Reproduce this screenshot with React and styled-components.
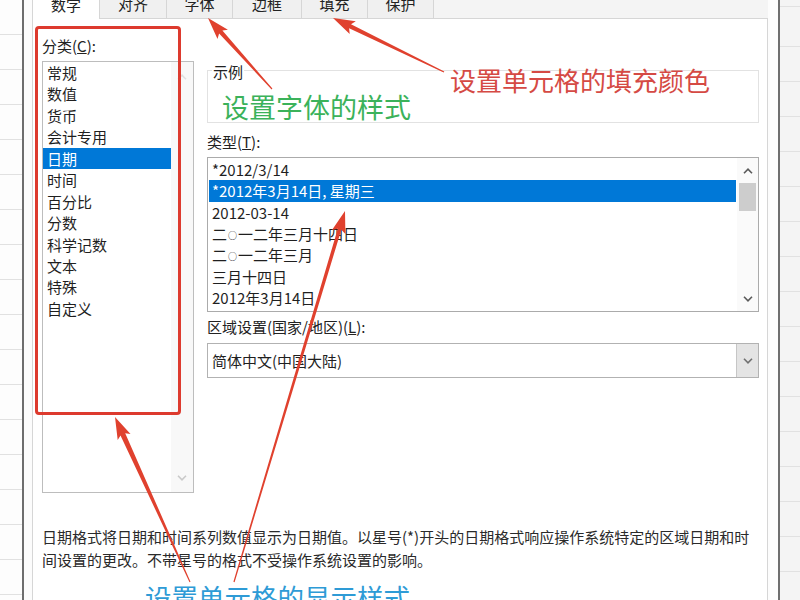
import React from 'react';
import styled, { createGlobalStyle } from 'styled-components';

const GlobalStyle = createGlobalStyle`
  html, body { margin: 0; padding: 0; width: 800px; height: 600px; overflow: hidden; background: #fff; }
  body { font-family: "Noto Sans CJK SC", "Noto Sans", sans-serif; color: #1f1f1f; }
  * { box-sizing: border-box; }
`;

const Page = styled.div`
  position: relative;
  width: 800px;
  height: 600px;
  display: flex;
  overflow: hidden;
`;

const Sheet = styled.div`
  width: ${(p) => p.$w}px;
  flex: none;
  background-color: ${(p) => p.$bg};
  background-image: repeating-linear-gradient(
    to bottom,
    transparent 0,
    transparent 34px,
    #e1e1e1 34px,
    #e1e1e1 35px
  );
  background-position: 0 ${(p) => p.$offset}px;
`;

const Dialog = styled.div`
  flex: 1;
  display: flex;
  flex-direction: column;
  border-left: 2px solid #6e6e6e;
  border-right: 2px solid #6e6e6e;
  background: #fcfcfc;
  padding: 0 10px 0 8px;
`;

const TabBar = styled.div`
  display: flex;
  height: 18px;
  flex: none;
  background: #f4f4f4;
`;

const Tab = styled.div`
  width: ${(p) => p.$w}px;
  display: flex;
  justify-content: center;
  align-items: flex-end;
  padding-bottom: 7px;
  font-size: 15px;
  line-height: 15px;
  color: #222;
  background: ${(p) => (p.$active ? '#fff' : '#f0f0f0')};
  border-right: 1px solid #d6d6d6;
  ${(p) =>
    p.$active &&
    `border-left: 1px solid #d6d6d6; height: 19px; margin-bottom: -1px; position: relative; z-index: 1;`}
`;

const Pane = styled.div`
  flex: 1;
  background: #fff;
  border: 1px solid #d6d6d6;
  border-bottom: none;
  padding: 17px 0 0 9px;
  display: grid;
  grid-template-columns: 152px 552px;
  column-gap: 13px;
  align-content: start;
`;

const Column = styled.div`
  display: flex;
  flex-direction: column;
`;

const FieldLabel = styled.div`
  font-size: 15px;
  line-height: 20px;
  color: #222;
  margin-top: ${(p) => p.$mt || 0}px;
  white-space: nowrap;
`;

const ListBox = styled.div`
  margin-top: 5px;
  height: ${(p) => p.$h}px;
  border: 1px solid ${(p) => p.$border};
  background: #fff;
  display: flex;
`;

const Items = styled.div`
  ${(p) => (p.$w ? `width: ${p.$w}px;` : 'flex: 1;')}
  padding: ${(p) => p.$pad};
  display: flex;
  flex-direction: column;
`;

const ListItem = styled.div`
  height: ${(p) => p.$h}px;
  line-height: ${(p) => p.$h}px;
  padding-left: ${(p) => p.$pl}px;
  font-size: 15px;
  white-space: nowrap;
  flex: none;
  background: ${(p) => (p.$selected ? '#0078d7' : 'transparent')};
  color: ${(p) => (p.$selected ? '#fff' : '#1f1f1f')};
`;

const SmallRing = styled.span`
  font-size: 9px;
  margin: 0 1px;
  vertical-align: 1px;
`;

const ScrollTrack = styled.div`
  width: ${(p) => p.$w}px;
  flex: none;
  display: flex;
  flex-direction: column;
  background: ${(p) => p.$bg};
`;

const ScrollButton = styled.div`
  height: ${(p) => p.$h}px;
  flex: none;
  display: flex;
  align-items: center;
  justify-content: center;
`;

const ScrollThumb = styled.div`
  height: ${(p) => p.$h}px;
  flex: none;
  margin: 0 2px;
  background: #cdcdcd;
`;

const ScrollSpace = styled.div`
  flex: 1;
`;

const GroupBox = styled.div`
  position: relative;
  margin-top: 34px;
  height: 53px;
  border: 1px solid #e2e2e2;
`;

const GroupLabel = styled.span`
  position: absolute;
  top: -9px;
  left: 4px;
  padding: 0 1px;
  background: #fff;
  font-size: 15px;
  line-height: 20px;
  color: #222;
`;

const Combo = styled.div`
  margin-top: 6px;
  height: 35px;
  border: 1px solid #b2b2b2;
  display: flex;
  background: #fff;
`;

const ComboText = styled.div`
  flex: 1;
  padding-left: 4px;
  font-size: 15px;
  line-height: 33px;
  color: #1f1f1f;
`;

const ComboButton = styled.div`
  width: 22px;
  flex: none;
  background: #e4e4e4;
  border-left: 1px solid #c6c6c6;
  display: flex;
  align-items: center;
  justify-content: center;
`;

const Description = styled.div`
  grid-column: 1 / -1;
  margin-top: 32px;
  font-size: 15px;
  line-height: 23px;
  color: #2a2a2a;
  white-space: nowrap;
`;

const RedFrame = styled.div`
  position: absolute;
  left: 35px;
  top: 26px;
  width: 146px;
  height: 389px;
  border: 3px solid #dd3a2e;
  border-radius: 4px;
  pointer-events: none;
`;

const Note = styled.span`
  position: absolute;
  left: ${(p) => p.$x}px;
  top: ${(p) => p.$y}px;
  font-size: ${(p) => p.$size}px;
  line-height: 1;
  color: ${(p) => p.$color};
  white-space: nowrap;
  pointer-events: none;
`;

const ArrowLayer = styled.svg`
  position: absolute;
  left: 0;
  top: 0;
  pointer-events: none;
`;

const Chevron = ({ dir, color = '#5a5a5a' }) => (
  <svg width="10" height="6" viewBox="0 0 10 6">
    <polyline
      points={dir === 'up' ? '1,5.2 5,1.2 9,5.2' : '1,0.8 5,4.8 9,0.8'}
      fill="none"
      stroke={color}
      strokeWidth="1.6"
    />
  </svg>
);

function arrowPoints([x1, y1], [x2, y2], t0 = 0.6, t1 = 2.2, L = 19, W = 7) {
  const dx = x2 - x1;
  const dy = y2 - y1;
  const len = Math.hypot(dx, dy);
  const ux = dx / len;
  const uy = dy / len;
  const nx = -uy;
  const ny = ux;
  const bx = x2 - ux * L;
  const by = y2 - uy * L;
  const kx = bx - ux * 3;
  const ky = by - uy * 3;
  const pts = [
    [x1 + nx * t0, y1 + ny * t0],
    [bx + nx * t1, by + ny * t1],
    [kx + nx * W, ky + ny * W],
    [x2, y2],
    [kx - nx * W, ky - ny * W],
    [bx - nx * t1, by - ny * t1],
    [x1 - nx * t0, y1 - ny * t0],
  ];
  return pts.map(([a, b]) => `${a.toFixed(1)},${b.toFixed(1)}`).join(' ');
}

const tabs = [
  { label: '数字', w: 68, active: true },
  { label: '对齐', w: 67 },
  { label: '字体', w: 66 },
  { label: '边框', w: 69 },
  { label: '填充', w: 66 },
  { label: '保护', w: 66 },
];

const categories = [
  '常规', '数值', '货币', '会计专用', '日期', '时间', '百分比', '分数', '科学记数', '文本', '特殊', '自定义',
];

const ring = (rest) => (
  <>
    二<SmallRing>○</SmallRing>
    {rest}
  </>
);

const types = [
  { key: 'a', text: '*2012/3/14' },
  { key: 'b', text: '*2012年3月14日, 星期三' },
  { key: 'c', text: '2012-03-14' },
  { key: 'd', text: ring('一二年三月十四日') },
  { key: 'e', text: ring('一二年三月') },
  { key: 'f', text: '三月十四日' },
  { key: 'g', text: '2012年3月14日' },
];

const arrows = [
  { from: [272, 89], to: [208, 18], t1: 2.2 },
  { from: [444, 72], to: [333, 18], t1: 2.2 },
  { from: [190, 582], to: [115, 417], t1: 2.6 },
  { from: [234, 582], to: [345, 211], t1: 1.8 },
];

export default function App() {
  return (
    <>
      <GlobalStyle />
      <Page>
        <Sheet $w={22} $bg="#fdfdfd" $offset={0} />
        <Dialog>
          <TabBar>
            {tabs.map((t) => (
              <Tab key={t.label} $w={t.w} $active={t.active}>
                {t.label}
              </Tab>
            ))}
          </TabBar>
          <Pane>
            <Column>
              <FieldLabel>
                分类(<u>C</u>):
              </FieldLabel>
              <ListBox $h={432} $border="#bdbdbd">
                <Items $w={128} $pad="0">
                  {categories.map((c) => (
                    <ListItem key={c} $h={21.45} $pl={4} $selected={c === '日期'}>
                      {c}
                    </ListItem>
                  ))}
                </Items>
                <ScrollTrack $w={22} $bg="#f8f8f8">
                  <ScrollButton $h={30}>
                    <Chevron dir="up" color="#e0e0e0" />
                  </ScrollButton>
                  <ScrollSpace />
                  <ScrollButton $h={28}>
                    <Chevron dir="down" color="#c9c9c9" />
                  </ScrollButton>
                </ScrollTrack>
              </ListBox>
            </Column>
            <Column>
              <GroupBox>
                <GroupLabel>示例</GroupLabel>
              </GroupBox>
              <FieldLabel $mt={9}>
                类型(<u>T</u>):
              </FieldLabel>
              <ListBox $h={155} $border="#ababab">
                <Items $pad="1px">
                  {types.map((t, i) => (
                    <ListItem key={t.key} $h={21.33} $pl={3} $selected={i === 1}>
                      {t.text}
                    </ListItem>
                  ))}
                </Items>
                <ScrollTrack $w={21} $bg="#fafafa">
                  <ScrollButton $h={25}>
                    <Chevron dir="up" />
                  </ScrollButton>
                  <ScrollThumb $h={28} />
                  <ScrollSpace />
                  <ScrollButton $h={25}>
                    <Chevron dir="down" />
                  </ScrollButton>
                </ScrollTrack>
              </ListBox>
              <FieldLabel $mt={5}>
                区域设置(国家/地区)(<u>L</u>):
              </FieldLabel>
              <Combo>
                <ComboText>简体中文(中国大陆)</ComboText>
                <ComboButton>
                  <Chevron dir="down" color="#707070" />
                </ComboButton>
              </Combo>
            </Column>
            <Description>
              日期格式将日期和时间系列数值显示为日期值。以星号(*)开头的日期格式响应操作系统特定的区域日期和时
              <br />
              间设置的更改。不带星号的格式不受操作系统设置的影响。
            </Description>
          </Pane>
        </Dialog>
        <Sheet $w={20} $bg="#f4f4f4" $offset={12} />

        <RedFrame />
        <Note $x={222} $y={93} $size={27} $color="#3bb25a">
          设置字体的样式
        </Note>
        <Note $x={450} $y={67} $size={26} $color="#d54a44">
          设置单元格的填充颜色
        </Note>
        <Note $x={145} $y={584} $size={26.5} $color="#2e9bd6">
          设置单元格的显示样式
        </Note>
        <ArrowLayer width="800" height="600" viewBox="0 0 800 600">
          {arrows.map((a, i) => (
            <polygon key={i} points={arrowPoints(a.from, a.to, 0.6, a.t1)} fill="#e0412e" />
          ))}
        </ArrowLayer>
      </Page>
    </>
  );
}
